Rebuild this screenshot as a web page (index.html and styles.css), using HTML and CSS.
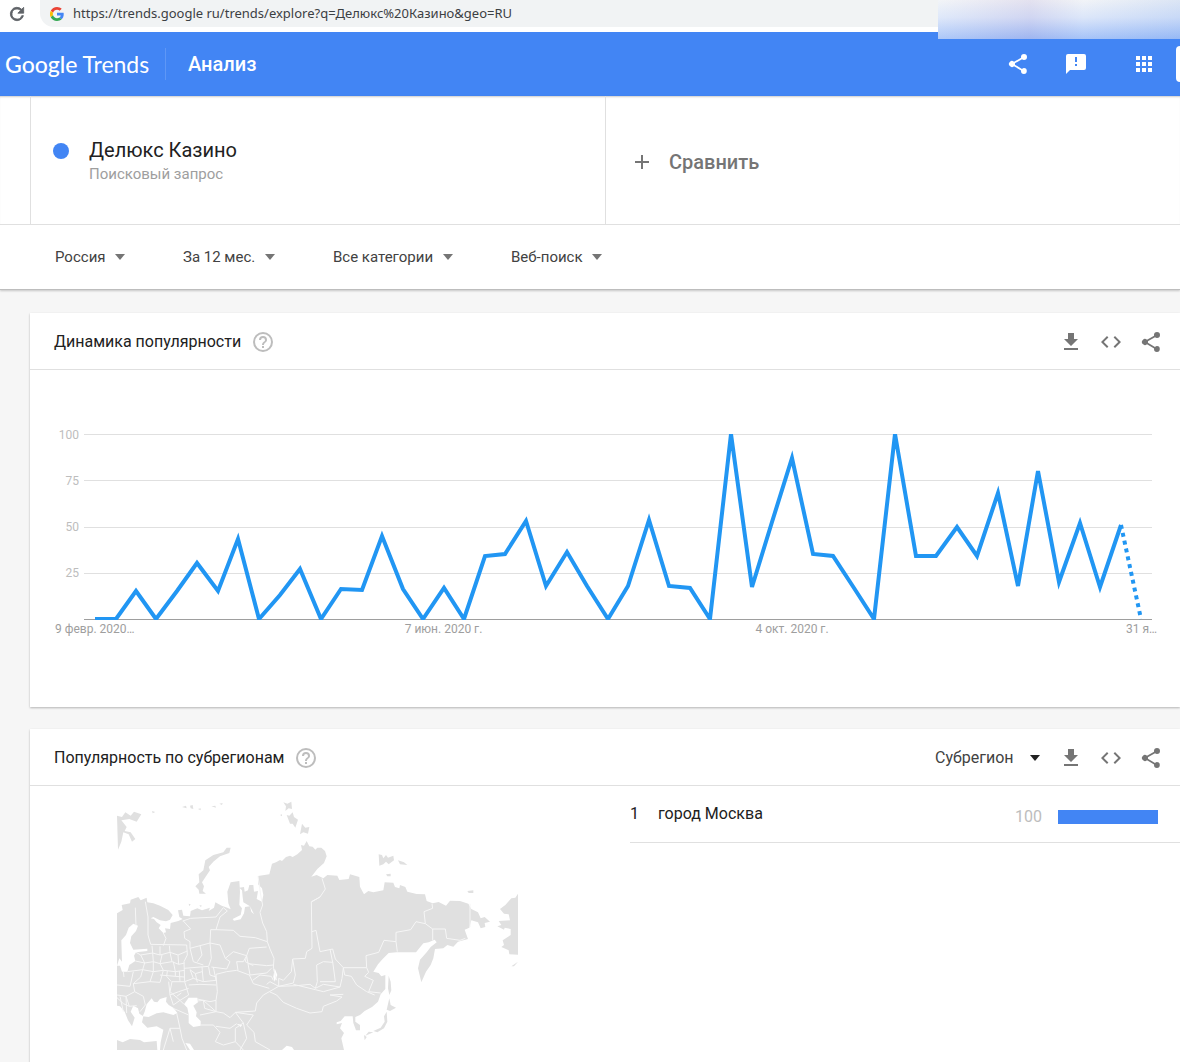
FILE: index.html
```html
<!DOCTYPE html>
<html lang="ru">
<head>
<meta charset="utf-8">
<meta name="viewport" content="width=device-width, initial-scale=1">
<title>Делюкс Казино – Анализ – Google Trends</title>
<link rel="stylesheet" href="styles.css">
</head>
<body>
<svg class="sprite" aria-hidden="true">
  <symbol id="share" viewBox="0 0 24 24"><path d="M18 16.1c-.8 0-1.4.3-2 .8l-7.100-4.200c.1-.2.1-.4.1-.7s0-.5-.1-.7L16 7.200c.5.5 1.200.8 2 .8a3 3 0 1 0-3-3c0 .2 0 .5.100.7L8 9.800A3 3 0 1 0 8 14.200l7.100 4.200c0 .2-.1.400-.1.600a2.900 2.900 0 1 0 3-2.900z"/></symbol>
  <symbol id="download" viewBox="0 0 24 24"><path d="M19 9h-4V3H9v6H5l7 7 7-7zM5 18v2h14v-2H5z"/></symbol>
  <symbol id="embed" viewBox="0 0 24 24"><path d="M9.400 16.600 4.800 12l4.600-4.600L8 6l-6 6 6 6 1.400-1.400zm5.200 0 4.600-4.600-4.600-4.600L16 6l6 6-6 6-1.400-1.400z"/></symbol>
  <symbol id="help" viewBox="0 0 24 24"><path d="M11 18h2v-2h-2v2zm1-16a10 10 0 1 0 0 20 10 10 0 0 0 0-20zm0 18a8 8 0 1 1 0-16 8 8 0 0 1 0 16zm0-14a4 4 0 0 0-4 4h2a2 2 0 1 1 4 0c0 2-3 1.750-3 5h2c0-2.250 3-2.500 3-5a4 4 0 0 0-4-4z"/></symbol>
</svg>

<div class="browser">
  <button class="reload" aria-label="Обновить">
    <svg width="20" height="20" viewBox="0 0 24 24"><path d="M17.650 6.350A8 8 0 1 0 19.730 14h-2.080A6 6 0 1 1 12 6c1.660 0 3.140.69 4.220 1.780L13 11h7V4l-2.350 2.350z" stroke="currentColor"/></svg>
  </button>
  <div class="address">
    <svg width="14" height="14" viewBox="0 0 48 48" aria-hidden="true">
      <path fill="#ea4335" d="M24 9.500c3.500 0 6.700 1.200 9.200 3.600l6.900-6.900C35.900 2.400 30.500 0 24 0 14.600 0 6.500 5.400 2.600 13.200l8 6.200C12.400 13.700 17.700 9.500 24 9.500z"/>
      <path fill="#4285f4" d="M47 24.600c0-1.600-.2-3.100-.4-4.600H24v9h12.900c-.6 3-2.200 5.500-4.700 7.200l7.700 6C44.400 38 47 31.800 47 24.600z"/>
      <path fill="#fbbc05" d="M10.500 28.600a14.500 14.500 0 0 1 0-9.200l-8-6.200a24 24 0 0 0 0 21.600l8-6.200z"/>
      <path fill="#34a853" d="M24 48c6.500 0 11.900-2.100 15.900-5.800l-7.700-6c-2.200 1.500-4.900 2.300-8.200 2.300-6.300 0-11.600-4.200-13.500-9.900l-8 6.200C6.500 42.600 14.600 48 24 48z"/>
    </svg>
    <input class="url" type="text" aria-label="Адрес" value="https://trends.google ru/trends/explore?q=Делюкс%20Казино&amp;geo=RU">
  </div>
  <div class="frost"></div>
</div>

<header class="header">
  <a class="logo" href="#"><span class="logo-google">Google</span><span class="logo-trends">Trends</span></a>
  <h1 class="section">Анализ</h1>
  <nav class="tools">
    <button class="icon" aria-label="Поделиться"><svg width="24" height="24"><use href="#share"/></svg></button>
    <button class="icon" aria-label="Отправить отзыв"><svg width="24" height="24" viewBox="0 0 24 24"><path d="M20 2H4a2 2 0 0 0-2 2v18l4-4h14a2 2 0 0 0 2-2V4a2 2 0 0 0-2-2zm-7 12h-2v-2h2v2zm0-4h-2V5h2v5z"/></svg></button>
    <button class="icon icon-apps" aria-label="Приложения"><svg width="24" height="24" viewBox="0 0 24 24"><path d="M4 4h4v4H4zM10 4h4v4h-4zM16 4h4v4h-4zM4 10h4v4H4zM10 10h4v4h-4zM16 10h4v4h-4zM4 16h4v4H4zM10 16h4v4h-4zM16 16h4v4h-4z"/></svg></button>
    <span class="account"></span>
  </nav>
</header>

<section class="query">
  <div class="terms">
    <div class="term">
      <span class="dot"></span>
      <div>
        <div class="term-name">Делюкс Казино</div>
        <div class="term-type">Поисковый запрос</div>
      </div>
    </div>
    <button class="compare">
      <svg width="24" height="24" viewBox="0 0 24 24" aria-hidden="true"><path d="M19 13h-6v6h-2v-6H5v-2h6V5h2v6h6v2z"/></svg>
      Сравнить
    </button>
  </div>
  <div class="filters">
    <label class="pick"><select aria-label="Страна"><option>Россия</option></select></label>
    <label class="pick"><select aria-label="Период"><option>За 12 мес.</option></select></label>
    <label class="pick"><select aria-label="Категория"><option>Все категории</option></select></label>
    <label class="pick"><select aria-label="Тип поиска"><option>Веб-поиск</option></select></label>
  </div>
</section>

<main class="cards">
  <section class="card">
    <div class="card-head">
      <h2 class="card-title">Динамика популярности</h2>
      <button class="icon icon-help" aria-label="Справка"><svg width="24" height="24"><use href="#help"/></svg></button>
      <div class="actions">
        <button class="icon" aria-label="Скачать"><svg width="24" height="24"><use href="#download"/></svg></button>
        <button class="icon" aria-label="Код для вставки"><svg width="24" height="24"><use href="#embed"/></svg></button>
        <button class="icon" aria-label="Поделиться"><svg width="24" height="24"><use href="#share"/></svg></button>
      </div>
    </div>
    <div class="chart">
      <div class="plot-row">
        <div class="y-axis"><span>100</span><span>75</span><span>50</span><span>25</span></div>
        <svg class="plot" viewBox="0 0 1068 186" preserveAspectRatio="none" role="img" aria-label="Динамика популярности">
          <path class="grid" d="M0 .5H1068M0 46.500H1068M0 93.500H1068M0 139.500H1068"/>
          <path class="base" d="M0 185.500H1068"/>
          <polyline class="line" points="11,185 32,185 52,157 72,185 93,157 113,129 134,157 154,105 175,185 196,161 216,135 237,185 257,155 278,156 298,102 319,155 339,185 360,154 380,185 401,122 421,120 442,87 462,152 483,118 503,152 524,185 544,152 565,86 585,152 606,154 626,185 647,0 668,153 688,88 708,24 729,120 749,122 770,154 790,185 811,0 832,122 852,122 873,93 893,122 914,59 934,152 954,37 975,148 996,89 1016,153 1037,91"/>
          <polyline class="line line-partial" points="1037,91 1057,185"/>
        </svg>
      </div>
      <div class="x-axis"><span>9 февр. 2020…</span><span>7 июн. 2020 г.</span><span>4 окт. 2020 г.</span><span>31 я…</span></div>
    </div>
  </section>

  <section class="card">
    <div class="card-head">
      <h2 class="card-title">Популярность по субрегионам</h2>
      <button class="icon icon-help" aria-label="Справка"><svg width="24" height="24"><use href="#help"/></svg></button>
      <div class="actions">
        <label class="pick pick-dark"><select aria-label="Уровень"><option>Субрегион</option></select></label>
        <button class="icon" aria-label="Скачать"><svg width="24" height="24"><use href="#download"/></svg></button>
        <button class="icon" aria-label="Код для вставки"><svg width="24" height="24"><use href="#embed"/></svg></button>
        <button class="icon" aria-label="Поделиться"><svg width="24" height="24"><use href="#share"/></svg></button>
      </div>
    </div>
    <div class="regions">
      <div class="map-box">
        <svg class="map" viewBox="21 15 1203 750" role="img" aria-label="Карта субрегионов">
          <g class="land">
            <path d="M21 355 38 345 35 330 60 325 62 314 85 306 92 316 110 308 112 322 130 325 150 332 175 345 188 360 180 374 168 379 150 376 130 366 122 370 132 372 140 382 152 390 146 400 160 414 168 412 165 400 180 402 182 384 205 378 218 372 208 366 204 346 216 344 220 362 240 364 242 348 262 340 276 346 300 338 296 348 312 338 316 322 335 332 352 338 362 343 355 325 352 290 362 262 388 258 390 290 388 330 396 340 392 360 368 372 372 377 392 373 402 355 405 336 420 334 424 350 432 358 420 334 400 322 398 306 396 286 388 278 402 276 404 290 414 286 418 270 430 270 432 290 444 288 440 312 456 320 460 300 456 280 444 268 444 243 478 238 486 206 498 202 510 195 516 198 528 186 540 182 548 186 562 178 576 165 573 150 582 152 590 138 598 154 608 155 616 164 622 158 634 158 645 168 650 184 642 204 622 222 604 245 620 240 640 250 652 240 682 242 688 255 716 252 720 238 748 246 750 275 762 298 775 288 790 292 820 286 824 262 850 263 855 276 868 280 870 270 886 276 892 290 920 297 945 298 950 318 968 325 986 321 1008 332 1020 317 1050 318 1075 326 1084 342 1104 352 1112 370 1124 366 1140 380 1124 384 1126 396 1112 400 1104 382 1084 376 1078 398 1064 404 1074 432 1044 440 1030 455 1012 450 1000 460 975 462 970 490 962 510 948 530 934 562 924 520 930 494 950 472 962 456 980 442 974 434 956 442 940 445 918 472 860 472 836 474 818 492 804 508 790 530 806 534 814 544 826 540 826 582 812 598 804 620 786 636 764 648 750 660 736 666 736 680 750 690 750 706 738 706 730 684 728 664 704 664 692 678 680 682 680 688 696 684 690 700 702 714 694 730 702 765 150 765 152 742 160 704 140 694 112 698 96 682 100 664 88 656 84 640 70 632 62 650 74 668 66 694 54 676 44 650 30 634 21 632zM21 735 38 742 60 732 90 735 102 742 140 738 142 765H21z"/>
            <path d="M21 62 36 66 46 52 62 62 72 50 94 58 80 80 58 72 34 76 50 96 44 108 62 112 76 132 66 140 56 118 40 112 34 140 24 164zM126 48l10 3-8 4zM216 36l12-4 2 8zM240 32l8-2 2 12-8-2zM264 42l8-2 0 6zM304 34l12-2 2 6zM328 26l10-2-2 6zM520 22 532 26 544 20 546 42 536 40 526 48 528 34zM530 60 538 62 548 52 552 66 564 74 556 98 548 86 540 86zM576 86 586 98 598 96 594 116 580 112 570 118zM362 158 358 174 330 184 310 200 296 216 300 226 288 244 276 262 282 274 278 288 288 296 268 296 266 284 256 274 268 262 266 238 280 226 286 196 310 180 340 172 350 158zM806 178 816 180 820 190 828 180 834 188 850 182 852 196 836 208 828 200 820 208 808 212zM864 196 882 202 892 210 870 208zM828 238 842 236 842 244 832 244zM1072 288 1090 286 1090 294 1076 294zM836 542 842 560 844 586 838 600 834 580zM838 610 842 630 858 638 840 648 830 644zM830 650 832 680 822 700 802 712 790 708 812 698 824 680 822 664zM776 710 790 712 766 722zM762 720l8 6-6 10zM1224 296V479L1198 478 1196 466 1174 456 1182 450 1178 436 1202 420 1202 402 1184 398 1182 404 1162 394 1174 390 1166 378 1200 376 1196 358 1182 356 1170 342 1186 330 1204 310 1216 308zM1224 500 1212 514 1204 514zM510 60l6-2 0 6zM236 326l6 2-4 6zM268 330l8 2-4 4z"/>
          </g>
          <g class="water">
            <path d="M70 386 84 392 78 408 64 424 60 444 70 464 112 461 112 468 78 472 72 482 76 498 58 510 52 530 36 530 30 512 21 512 28 490 36 500 34 436 48 420 56 398z"/>
            <path d="M98 664 104 650 110 628 125 610 132 620 142 622 150 612 170 606 168 620 176 630 190 638 202 654 190 660 160 652 140 655 116 666z"/>
            <path d="M222 628 236 608 262 608 264 622 250 632 260 652 258 664 272 678 272 692 250 696 236 684 236 658 232 638z"/>
            <path d="M226 744 240 746 252 765 240 765zM516 765 530 752 546 756 552 765zM380 686 396 690 392 696zM494 520 502 540 494 560 490 546z"/>
          </g>
          <path class="borders" d="M444 243 452 300 458 330 450 352 458 384 470 410 472 440 436 428 390 424 370 406 318 404 330 366 352 348 340 338 318 366 242 370 218 378M630 306 604 320 606 460 590 470 586 490 548 492 544 530 520 556 506 550 506 574 480 560 470 568M472 440 480 462 492 490 490 520 500 556M636 250 646 282 630 306 606 320M606 410 618 406 630 470 668 462 676 492 700 518 770 518 768 482 806 472 822 436 858 440 858 412 902 404 918 380 946 386 942 350 968 340 966 326M858 440 862 470M968 402V436M946 386 968 402 1006 402 1010 430 1050 436 1066 430M1080 326V396M548 492 556 540 550 564 506 574M700 518 704 540 724 544 740 570 770 590 794 600M770 518 776 532 764 544 790 556 776 590 812 594M700 518 696 550 690 576 640 568 616 580 622 560 620 510 640 500 668 502 660 462M690 576 640 590 616 584 550 568M668 500 676 560 630 560M616 580 600 568 560 572 506 574 478 590 500 600 520 622 560 640 600 654 636 650 640 634 680 618 696 606 660 600 700 598M478 590 460 600 440 624 436 648 376 652 360 668 340 654 318 650 318 616 322 590 318 538 350 530 380 526 418 540 430 566 478 580M376 652 430 660 410 690 432 712 436 740 480 765M410 482 406 500 430 512 M428 556 450 540 484 544 490 556M318 650 280 616 262 618M272 690 310 690 330 712 316 740 340 750 376 740 376 700 400 684 376 652M376 740 400 765M400 684 410 730 390 765M318 694 360 700 380 686M230 765 216 730 210 700 200 654M210 700 180 700 160 765M180 700 190 740M76 338 78 392M106 320 114 366 114 420 122 448 230 450 232 480 222 500 224 560 236 600 210 616 180 590 186 560M160 414 168 430 160 452M220 378 242 402 222 410 224 430 240 440 240 460 300 444 302 404 318 404M300 444 304 490 296 514 222 520M240 460 250 500 280 510M270 452 276 480 262 500M300 444 330 450 346 490 360 500 350 522 304 516M346 490 370 470 410 482 400 500 380 500 384 526M410 482 418 460 470 456M410 482 414 506 470 512 490 510M414 506 420 540 470 534 484 520M78 472 92 480 128 474 126 452M128 474 150 480 150 454M150 480 180 472 178 452M180 472 204 480 232 468M92 480 104 504 130 500 128 474M130 500 150 506 156 480M150 506 186 500 180 472M186 500 206 508 204 480M206 508 224 504M76 498 104 504 98 524 130 530 130 500M52 530 98 524 92 546 70 566 120 560 130 530M130 530 160 526 150 506M160 526 196 530 190 500M196 530 224 526M120 560 150 562 160 526M150 540 196 544 196 530M196 544 224 546M172 528 170 544 184 560M208 528 210 560M240 524 256 536 276 530M256 536 262 562M296 516 300 540 318 546M186 560 224 560 250 550 240 524M250 550 280 560 276 516M280 560 318 556 310 516M236 570 270 568 318 570M70 566 74 590 48 604 21 600M21 570 60 574 70 530M74 590 100 604 106 630 90 650M48 604 58 634 40 626 21 608M58 634 80 632M30 604 40 650M48 604 50 654M176 560 180 600 206 590 236 580M180 600 190 630 210 616 222 628M200 604 214 594M190 640 236 660M40 530 42 546M262 612 300 620 318 616M280 616 284 640 318 650 270 660"/>
        </svg>
      </div>
      <ol class="list">
        <li class="row">
          <span class="rank">1</span>
          <a class="region" href="#">город Москва</a>
          <span class="score">100</span>
          <span class="meter"><span class="meter-fill" style="width:100%"></span></span>
        </li>
      </ol>
    </div>
  </section>
</main>
</body>
</html>
```
FILE: styles.css
```css
* { box-sizing: border-box; }

body {
  margin: 0;
  overflow-x: hidden;
  background: #f6f6f6;
  color: #212121;
  font: 15px/20px Roboto, "Liberation Sans", sans-serif;
}

button, select, input {
  margin: 0;
  padding: 0;
  border: 0;
  background: none;
  color: inherit;
  font: inherit;
}

h1, h2 { margin: 0; font-weight: 400; }
a { color: inherit; text-decoration: none; }
svg { display: block; fill: currentColor; }
.sprite { position: absolute; width: 0; height: 0; }

/* Browser toolbar */
.browser {
  position: relative;
  display: flex;
  height: 32px;
  padding: 0 0 5px 7px;
  background: #fff;
}
.reload { width: 20px; margin-right: 13px; color: #5f6368; }
.address {
  flex: 1;
  display: flex;
  align-items: center;
  gap: 9px;
  padding-left: 10px;
  border-radius: 0 0 0 14px;
  background: #f1f3f4;
}
.url {
  flex: 1;
  height: 20px;
  margin-bottom: 2px;
  color: #3c4043;
  font: 13px/20px "Noto Sans", "Open Sans", sans-serif;
}
.frost {
  position: absolute;
  top: 0;
  right: 0;
  width: 242px;
  height: 39px;
  background:
    linear-gradient(90deg, #ffffff44 0%, #c8b8e044 38%, #ffffff33 60%, #a9c5f444 100%),
    linear-gradient(#eef1f5 0%, #d3e0f8 45%, #8fb4f6 100%);
}

/* Blue header */
.header {
  display: flex;
  align-items: center;
  height: 64px;
  padding-left: 5px;
  background: #4285f4;
  color: #fff;
}
.logo {
  display: flex;
  gap: 5px;
  width: 161px;
  border-right: 1px solid #5e97f6;
  font: 23px/32px Lato, "Open Sans", sans-serif;
}
.logo-google { font-weight: 500; }
.section {
  padding-left: 22px;
  font-size: 20px;
  font-weight: 500;
}
.tools { display: flex; align-items: center; margin-left: auto; }
.tools .icon { margin-right: 34px; }
.tools .icon-apps { margin: 0 20px 0 10px; }
.account {
  width: 4px;
  height: 36px;
  border-radius: 4px 0 0 4px;
  background: #fff;
}
.icon { color: inherit; cursor: pointer; }

/* Query and filters */
.query {
  background: #fff;
  border-bottom: 1px solid #bdbdbd;
  box-shadow: 0 1px 2px #0003;
}
.terms {
  display: grid;
  grid-template-columns: 1fr 1fr;
  height: 129px;
  padding-left: 30px;
  border-bottom: 1px solid #e0e0e0;
  box-shadow: inset 0 2px 2px -1px #0003;
}
.term {
  display: flex;
  align-items: center;
  gap: 20px;
  padding: 2px 22px 0;
  border-left: 1px solid #e0e0e0;
}
.dot {
  width: 16px;
  height: 16px;
  margin-bottom: 20px;
  border-radius: 50%;
  background: #4285f4;
}
.term-name { font-size: 20px; line-height: 26px; }
.term-type { color: #9e9e9e; line-height: 22px; }
.compare {
  display: flex;
  align-items: center;
  gap: 15px;
  padding: 4px 24px 0;
  border-left: 1px solid #e0e0e0;
  color: #757575;
  font-size: 20px;
  font-weight: 500;
}
.filters {
  display: flex;
  align-items: center;
  gap: 58px;
  height: 64px;
  padding-left: 55px;
  color: #424242;
}
.pick { display: flex; align-items: center; gap: 9px; }
.pick select { appearance: none; }
.pick::after {
  content: "";
  border: 5px solid transparent;
  border-top: 6px solid #757575;
  border-bottom: 0;
}

/* Cards */
.cards {
  display: grid;
  gap: 22px;
  padding: 23px 0 0 30px;
}
.card { background: #fff; box-shadow: 0 1px 2px #0004; }
.card-head {
  display: flex;
  align-items: center;
  height: 57px;
  padding: 1px 17px 0 24px;
  border-bottom: 1px solid #e0e0e0;
}
.card-title { font-size: 16px; }
.icon-help { margin-left: 10px; color: #bdbdbd; }
.actions {
  display: flex;
  align-items: center;
  gap: 16px;
  margin-left: auto;
  color: #757575;
}
.pick-dark { gap: 16px; margin-right: 3px; color: #424242; font-size: 16px; }
.pick-dark::after { border-top-color: #212121; }

/* Line chart */
.chart { padding: 64px 23px 69px 25px; }
.plot-row { display: grid; grid-template-columns: 24px 1fr; gap: 5px; padding-right: 5px; }
.y-axis {
  display: grid;
  grid-auto-rows: 46px;
  height: 186px;
  margin-top: -8px;
  color: #bdbdbd;
  font-size: 12px;
  line-height: 18px;
  text-align: right;
}
.plot { width: 100%; height: 186px; }
.grid { stroke: #e0e0e0; }
.base { stroke: #9e9e9e; }
.line { fill: none; stroke: #2196f3; stroke-width: 4; }
.line-partial { stroke-dasharray: 4 4; }
.x-axis {
  display: grid;
  grid-template-columns: 79px 619fr 78fr 326fr;
  color: #9e9e9e;
  font-size: 12px;
  line-height: 18px;
  text-align: center;
  white-space: nowrap;
}
.x-axis span:first-child { text-align: left; }
.x-axis span:last-child { text-align: right; }

/* Regions */
.regions { display: grid; grid-template-columns: 576px 1fr; column-gap: 24px; }
.map-box { padding: 14px 0 24px 87px; }
.map { width: 401px; height: 250px; }
.land { fill: #e0e0e0; }
.water { fill: #fff; }
.borders { fill: none; stroke: #f6f6f6; stroke-width: 3; stroke-linejoin: round; }
.list { margin: 0; padding: 0; list-style: none; }
.row {
  display: flex;
  align-items: center;
  height: 57px;
  padding-right: 22px;
  border-bottom: 1px solid #e0e0e0;
  font-size: 16px;
}
.rank { width: 28px; }
.score { margin: 6px 16px 0 auto; color: #bdbdbd; }
.meter { width: 100px; height: 14px; margin-top: 6px; }
.meter-fill { display: block; height: 100%; background: #4285f4; }
```
